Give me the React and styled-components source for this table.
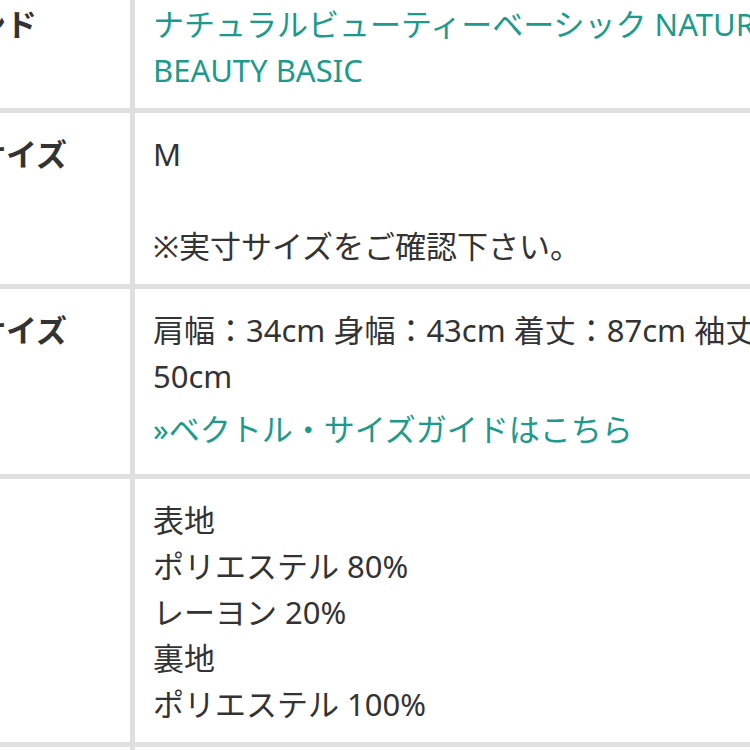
import styled, { createGlobalStyle } from "styled-components";

const GlobalStyle = createGlobalStyle`
    html, body {
        margin: 0;
        padding: 0;
        background: #ffffff;
        overflow: hidden;
    }
    body {
        font-family: "Noto Sans", "Noto Sans CJK JP", sans-serif;
        color: #333333;
    }
`

const Page = styled.div`
    width: 750px;
    height: 750px;
    overflow: hidden;
`

const SpecTable = styled.div`
    display: grid;
    grid-template-columns: 237px 718px;
    gap: 5px;
    padding: 5px;
    background-color: #dfdfdf;
    margin: -22px 0 0 -112px;
    width: max-content;
`

const Label = styled.div`
    background-color: #ffffff;
    padding: 18px 12px 15px 20px;
    font-size: 31px;
    line-height: 46px;
    font-weight: bold;
    color: #333333;
    white-space: nowrap;
`

const Value = styled.div`
    background-color: #ffffff;
    padding: 18px 20px 15px 18px;
    font-size: 31px;
    line-height: 46px;
    color: ${props => props.$link ? "#1d9a8b" : "#333333"};
`

const Line = styled.div`
    min-height: 46px;
`

const GuideLink = styled.a`
    display: block;
    margin: 7px 0;
    color: #1d9a8b;
    text-decoration: none;
`

const rows = [
    { label: "ブランド", link: true, lines: ["ナチュラルビューティーベーシック NATURAL BEAUTY BASIC"] },
    { label: "表記サイズ", lines: ["M", "", "※実寸サイズをご確認下さい。"] },
    { label: "実寸サイズ", lines: ["肩幅：34cm 身幅：43cm 着丈：87cm 袖丈：50cm"], guide: "»ベクトル・サイズガイドはこちら" },
    { label: "素材", lines: ["表地", "ポリエステル 80%", "レーヨン 20%", "裏地", "ポリエステル 100%"] },
    { label: "カラー", lines: ["ベージュ"] },
]

const App = () => {
    return (
        <Page>
            <GlobalStyle />
            <SpecTable>
                {rows.map(r => (
                    <>
                        <Label key={r.label + "-l"}>{r.label}</Label>
                        <Value key={r.label + "-v"} $link={r.link}>
                            {r.lines.map((l, i) => (
                                <Line key={i}>{l}</Line>
                            ))}
                            {r.guide && <GuideLink href="#">{r.guide}</GuideLink>}
                        </Value>
                    </>
                ))}
            </SpecTable>
        </Page>
    )
}

export default App
